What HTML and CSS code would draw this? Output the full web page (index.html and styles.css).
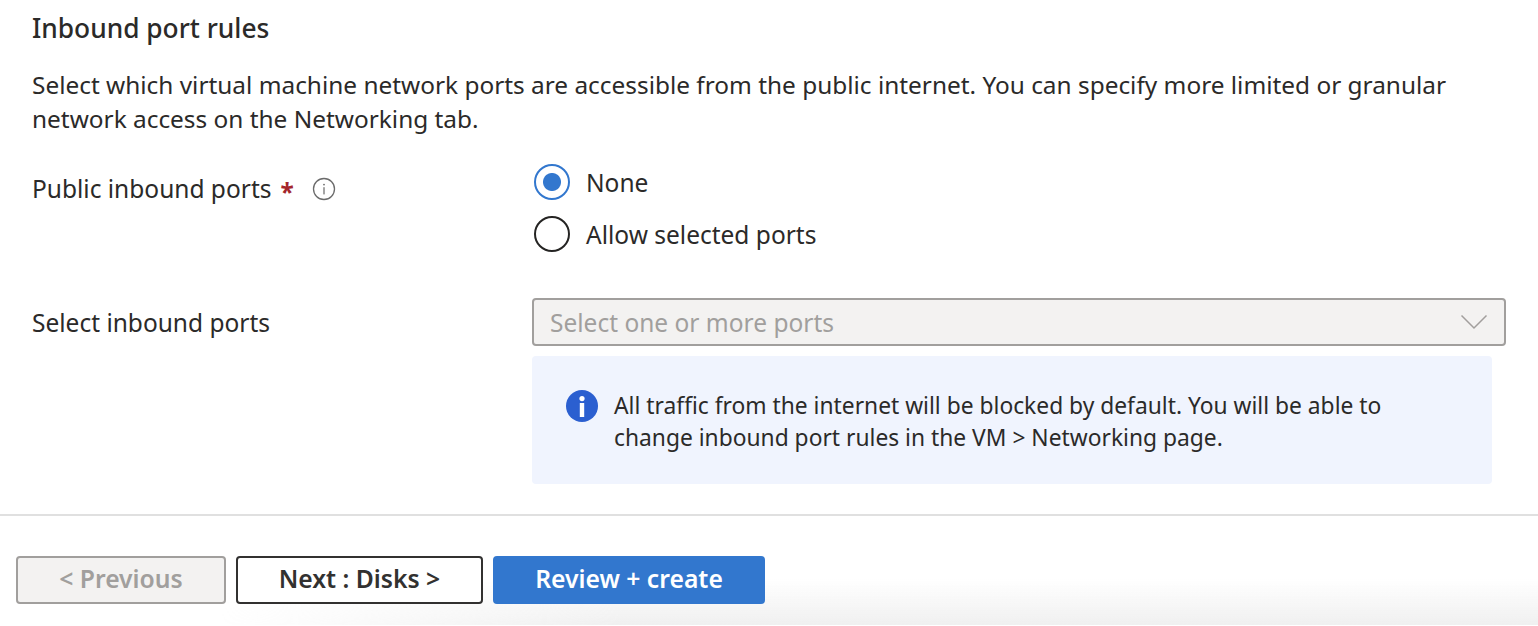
FILE: index.html
```html
<!DOCTYPE html>
<html lang="en">
<head>
  <meta charset="UTF-8" />
  <title>Inbound port rules</title>
  <meta name="viewport" content="width=device-width, initial-scale=1" />
  <link rel="stylesheet" href="styles.css">
</head>
<body>

  <div class="content">
    <h2>Inbound port rules</h2>
    <p class="intro">Select which virtual machine network ports are accessible from the public internet. You can specify more limited or granular network access on the Networking tab.</p>

    <!-- Public inbound ports -->
    <div class="row row-ports">
      <div class="label">
        <span>Public inbound ports</span>
        <span class="required">*</span>
        <svg class="tip" width="24" height="24" viewBox="0 0 24 24">
          <circle cx="12" cy="12" r="10.5" fill="none" stroke="#6b6b6b" stroke-width="1.3"/>
          <circle cx="12" cy="7.6" r="0.9" fill="#6b6b6b"/>
          <rect x="11.4" y="10.2" width="1.2" height="7.2" fill="#6b6b6b"/>
        </svg>
      </div>
      <div class="radios">
        <div class="radio-item">
          <span class="radio checked"></span>
          <span class="radio-text">None</span>
        </div>
        <div class="radio-item">
          <span class="radio"></span>
          <span class="radio-text">Allow selected ports</span>
        </div>
      </div>
    </div>

    <!-- Select inbound ports -->
    <div class="row row-select">
      <div class="label">Select inbound ports</div>
      <div class="field">
        <div class="select">
          <span class="select-text">Select one or more ports</span>
          <svg width="28" height="16" viewBox="0 0 28 16">
            <path d="M1.5 1.5 L14 14 L26.5 1.5" fill="none" stroke="#a19f9d" stroke-width="1.5"/>
          </svg>
        </div>
        <div class="info">
          <svg class="info-icon" width="32" height="32" viewBox="0 0 32 32">
            <circle cx="16" cy="16" r="16" fill="#2b5fd0"/>
            <circle cx="16" cy="8.6" r="2.6" fill="#fff"/>
            <rect x="13.8" y="13" width="4.4" height="14" fill="#fff"/>
          </svg>
          <p>All traffic from the internet will be blocked by default. You will be able to change inbound port rules in the VM &gt; Networking page.</p>
        </div>
      </div>
    </div>
  </div>

  <div class="footer">
    <button class="btn btn-disabled">&lt; Previous</button>
    <button class="btn btn-next">Next : Disks &gt;</button>
    <button class="btn btn-primary">Review + create</button>
  </div>

</body>
</html>
```

FILE: styles.css
```css
body {
  margin: 0;
  height: 626px;
  overflow: hidden;
  background: #fff;
  color: #2b2a29;
  font-family: "Noto Sans", "Open Sans", sans-serif;
  font-size: 24.5px;
  line-height: 34px;
}

.content {
  padding: 11px 32px 0;
}

h2 {
  margin: 0;
  font-size: 26.3px;
  font-weight: 500;
  line-height: 34px;
}

.intro {
  margin: 23px 0 0;
  font-size: 24.4px;
}

.row {
  display: flex;
}

.row-ports {
  margin-top: 27px;
  height: 135px;
}

.label {
  width: 500px;
  flex: none;
  display: flex;
  align-items: center;
  height: 34px;
}

.row-ports .label {
  margin-top: 9px;
}

.row-select .label {
  margin-top: 8px;
}

.required {
  color: #a4262c;
  font-weight: 700;
  margin: 6px 18px 0 9px;
}

.radios {
  display: flex;
  flex-direction: column;
  gap: 18px;
  margin-top: 2px;
}

.radio-item {
  display: flex;
  align-items: center;
  gap: 16px;
  height: 34px;
}

.radio-text,
.select-text {
  padding-top: 2px;
}

.radio {
  box-sizing: border-box;
  width: 36px;
  height: 36px;
  margin-left: 2px;
  border: 2px solid #252423;
  border-radius: 50%;
}

.radio.checked {
  border-color: #3277ce;
  background: radial-gradient(circle, #3277ce 0 8.5px, #fff 9.5px);
}

.field {
  width: 974px;
}

.select {
  box-sizing: border-box;
  height: 48px;
  display: flex;
  align-items: center;
  justify-content: space-between;
  padding: 0 16px;
  background: #f3f2f1;
  border: 2px solid #a19f9d;
  border-radius: 4px;
  color: #a19f9d;
}

.info {
  box-sizing: border-box;
  width: 960px;
  height: 128px;
  margin-top: 10px;
  padding: 34px 60px 0 34px;
  display: flex;
  gap: 16px;
  background: #f0f4fe;
  border-radius: 4px;
  font-size: 22.8px;
  line-height: 32px;
}

.info p {
  margin: 0;
}

.info-icon {
  flex: none;
}

.footer {
  position: relative;
  margin-top: 30px;
  height: 111px;
  box-sizing: border-box;
  padding: 40px 16px 0;
  display: flex;
  align-items: flex-start;
  gap: 10px;
  border-top: 2px solid #e0e0e0;
}

/* shadow at the bottom edge, fades out to the left */
.footer::before {
  content: "";
  position: absolute;
  left: 0;
  right: 0;
  bottom: 0;
  height: 46px;
  background: linear-gradient(to bottom, rgba(240, 240, 240, 0), #f0f0f0);
  -webkit-mask-image: linear-gradient(to right, transparent 220px, #000 620px);
  mask-image: linear-gradient(to right, transparent 220px, #000 620px);
}

.btn {
  position: relative;
  box-sizing: border-box;
  height: 48px;
  padding: 0 0 2px;
  border-radius: 4px;
  font-family: inherit;
  font-size: 24.7px;
  font-weight: 600;
  line-height: 34px;
}

.btn-disabled {
  width: 210px;
  background: #f3f2f1;
  border: 2px solid #a19f9d;
  color: #a19f9d;
}

.btn-next {
  width: 247px;
  background: #fff;
  border: 2px solid #323130;
  color: #323130;
}

.btn-primary {
  width: 272px;
  background: #3277ce;
  border: 2px solid #3277ce;
  color: #fff;
}
```
